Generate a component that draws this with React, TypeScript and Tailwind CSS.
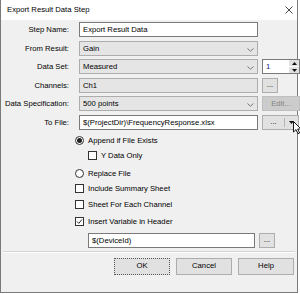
import React from "react";

function Chevron() {
  return (
    <svg width="7" height="4" viewBox="0 0 7 4" className="absolute right-[3px] top-[6px]">
      <path d="M0.5 0.5 L3.5 3.2 L6.5 0.5" fill="none" stroke="#6a6a6a" strokeWidth="0.9" />
    </svg>
  );
}

function Field({ value, select, children }: { value: string; select?: boolean; children?: React.ReactNode }) {
  return (
    <div
      className={
        select
          ? "relative h-[15px] border border-[#adadad] bg-[#e5e5e5] pl-[3px] leading-[13px]"
          : "relative h-[15px] border border-[#7a7a7a] bg-white pl-[3px] leading-[13px]"
      }
    >
      {value}
      {children}
    </div>
  );
}

function Btn({ label, className = "" }: { label: string; className?: string }) {
  return (
    <div
      className={`flex h-[15px] items-center justify-center border border-[#adadad] bg-[#e1e1e1] leading-none ${className}`}
    >
      {label}
    </div>
  );
}

function Check({ checked }: { checked?: boolean }) {
  return (
    <span className="flex h-[9px] w-[9px] shrink-0 items-center justify-center border border-[#333] bg-white">
      {checked && (
        <svg width="7" height="7" viewBox="0 0 7 7">
          <path d="M1 3.6 L2.8 5.4 L6 1.4" fill="none" stroke="#333" strokeWidth="1" />
        </svg>
      )}
    </span>
  );
}

function Radio({ checked }: { checked?: boolean }) {
  return (
    <span className="flex h-[9px] w-[9px] shrink-0 items-center justify-center rounded-full border border-[#333] bg-white">
      {checked && <span className="h-[5px] w-[5px] rounded-full bg-[#222]" />}
    </span>
  );
}

export default function App() {
  const label = "pr-[6px] text-right leading-[15px]";
  return (
    <div className="relative h-[294px] w-[300px] bg-white font-['Liberation_Sans',Arial,sans-serif] text-[7.7px] text-black">
      <div className="flex h-[293px] w-[298px] flex-col border-x border-b border-[#7a7a7a]">
        <div className="flex h-[20px] shrink-0 items-center justify-between bg-white pl-[6px] pr-[4px]">
          <span>Export Result Data Step</span>
          <svg width="8" height="8" viewBox="0 0 8 8">
            <path d="M0.5 0.5 L7.5 7.5 M7.5 0.5 L0.5 7.5" stroke="#333" strokeWidth="0.9" />
          </svg>
        </div>

        <div className="flex flex-1 flex-col bg-[#f0f0f0] pt-[2px]">
          <div className="grid grid-cols-[74px_179px_38px] gap-x-[4px] gap-y-[3.5px]">
            <div className={label}>Step Name:</div>
            <Field value="Export Result Data" />
            <div />

            <div className={label}>From Result:</div>
            <Field value="Gain" select>
              <Chevron />
            </Field>
            <div />

            <div className={label}>Data Set:</div>
            <Field value="Measured" select>
              <Chevron />
            </Field>
            <div className="flex h-[15px] border border-[#7a7a7a] bg-white">
              <span className="flex-1 pl-[3px] leading-[13px] text-[#1a237e]">1</span>
              <div className="flex w-[10px] flex-col gap-[1px] bg-white">
                <div className="flex flex-1 items-center justify-center bg-[#e1e1e1]">
                  <svg width="5" height="3" viewBox="0 0 5 3">
                    <path d="M0 3 L2.5 0 L5 3 Z" fill="#111" />
                  </svg>
                </div>
                <div className="flex flex-1 items-center justify-center bg-[#e1e1e1]">
                  <svg width="5" height="3" viewBox="0 0 5 3">
                    <path d="M0 0 L2.5 3 L5 0 Z" fill="#111" />
                  </svg>
                </div>
              </div>
            </div>

            <div className={label}>Channels:</div>
            <Field value="Ch1" select />
            <div>
              <Btn label="..." className="w-[16px]" />
            </div>

            <div className={label}>Data Specification:</div>
            <Field value="500 points" select>
              <Chevron />
            </Field>
            <div className="flex h-[15px] items-center justify-center border border-[#bfbfbf] bg-[#cccccc] text-[#838383]">
              Edit...
            </div>

            <div className={label}>To File:</div>
            <Field value="$(ProjectDir)\FrequencyResponse.xlsx" />
            <div className="flex h-[15px] w-[37px] items-center border border-[#adadad] bg-[#e1e1e1]">
              <span className="flex-1 text-center leading-none">...</span>
              <span className="h-[9px] w-px bg-[#b5b5b5]" />
              <span className="flex w-[13px] justify-center">
                <svg width="5" height="3" viewBox="0 0 5 3">
                  <path d="M0 0 L2.5 3 L5 0 Z" fill="#111" />
                </svg>
              </span>
            </div>
          </div>

          <div className="flex flex-col pl-[74px] pt-[4px]">
            <label className="flex h-[14px] items-center gap-[4px]">
              <Radio checked />
              <span>Append if File Exists</span>
            </label>
            <label className="ml-[13px] mt-[1px] flex h-[14px] items-center gap-[4px]">
              <Check />
              <span>Y Data Only</span>
            </label>
            <label className="mt-[4px] flex h-[14px] items-center gap-[4px]">
              <Radio />
              <span>Replace File</span>
            </label>
            <label className="mt-[1px] flex h-[14px] items-center gap-[4px]">
              <Check />
              <span>Include Summary Sheet</span>
            </label>
            <label className="mt-[2px] flex h-[14px] items-center gap-[4px]">
              <Check />
              <span>Sheet For Each Channel</span>
            </label>
            <label className="mt-[3px] flex h-[14px] items-center gap-[4px]">
              <Check checked />
              <span>Insert Variable in Header</span>
            </label>
            <div className="ml-[13px] mt-[4px] flex items-center gap-[4px]">
              <div className="h-[15px] w-[167px] border border-[#7a7a7a] bg-white pl-[3px] leading-[13px]">
                $(DeviceId)
              </div>
              <Btn label="..." className="w-[16px]" />
            </div>
          </div>

          <div className="mx-[2px] mt-[3px] border-t border-[#d5d5d5] border-b border-b-white" />

          <div className="mt-[5px] flex justify-end gap-[6px] pr-[3px]">
            <div className="flex h-[17px] w-[56px] items-center justify-center border border-dotted border-[#555] bg-[#e1e1e1]">
              OK
            </div>
            <Btn label="Cancel" className="h-[17px] w-[56px]" />
            <Btn label="Help" className="h-[17px] w-[56px]" />
          </div>
        </div>
      </div>

      <svg width="9" height="14" viewBox="0 0 9 14" className="absolute left-[293px] top-[121px]">
        <path d="M0.5 0.5 L0.5 11 L3 8.6 L5 12.8 L6.6 12 L4.7 8 L8 8 Z" fill="#fff" stroke="#000" strokeWidth="0.9" />
      </svg>
    </div>
  );
}
